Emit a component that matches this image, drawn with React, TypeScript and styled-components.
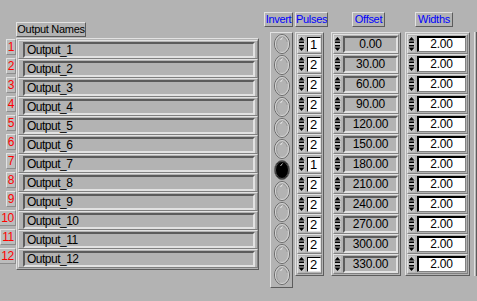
import * as React from 'react';
import styled, { createGlobalStyle } from 'styled-components';

const GRAY = '#b3b3b3';
const LIGHT = '#e2e2e2';
const DARK = '#5c5c5c';
const MID = '#808080';

const names = Array.from({ length: 12 }, (_, i) => `Output_${i + 1}`);
const pulses = [1, 2, 2, 2, 2, 2, 1, 2, 2, 2, 2, 2];
const offsets = Array.from({ length: 12 }, (_, i) => (i * 30).toFixed(2));
const widths = Array.from({ length: 12 }, () => '2.00');
const inverted = names.map((_, i) => i === 6);

const GlobalStyle = createGlobalStyle`
  body {
    margin: 0;
    background: ${GRAY};
    font-family: "Liberation Sans", Arial, sans-serif;
  }
`;

const UpArrow = () => (
  <svg width="7" height="8" viewBox="0 0 7 8">
    <polygon points="0.5,4.5 3.5,1 6.5,4.5" fill="#000" />
    <rect x="1" y="5.5" width="5" height="1.5" fill="#000" />
  </svg>
);

const DownArrow = () => (
  <svg width="7" height="8" viewBox="0 0 7 8">
    <rect x="1" y="1" width="5" height="1.5" fill="#000" />
    <polygon points="0.5,3.5 3.5,7 6.5,3.5" fill="#000" />
  </svg>
);

const Spinner = () => (
  <SpinnerStack>
    <ArrowButton>
      <UpArrow />
    </ArrowButton>
    <ArrowButton>
      <DownArrow />
    </ArrowButton>
  </SpinnerStack>
);

const RoundButton = ({ on }: { on: boolean }) => (
  <svg width="16" height="20" viewBox="0 0 16 20">
    <ellipse cx="8" cy="10" rx="7.5" ry="9.5" fill={on ? '#000' : GRAY} stroke="#6a6a6a" />
    <ellipse cx="8" cy="10" rx="6.5" ry="8.5" fill="none" stroke={on ? '#555' : '#d6d6d6'} />
    {!on && <ellipse cx="8" cy="10.5" rx="5.5" ry="7.5" fill="none" stroke="#9a9a9a" strokeDasharray="0 12 14" />}
    <path d="M6.5 6 L8.5 3.5" stroke={on ? '#c8c8c8' : '#ececec'} strokeWidth="1" />
  </svg>
);

export default function App(): React.ReactElement {
  return (
    <Screen>
      <GlobalStyle />
      <NamesSection>
        <Caption $width={70} $offset={13}>
          Output Names
        </Caption>
        <ArrayBody>
          <IndexColumn>
            {names.map((_, i) => (
              <IndexBox key={i}>{i + 1}</IndexBox>
            ))}
          </IndexColumn>
          <ArrayFrame>
            {names.map((n) => (
              <NameCell key={n}>
                <NameField>{n}</NameField>
              </NameCell>
            ))}
          </ArrayFrame>
        </ArrayBody>
      </NamesSection>

      <Column $gap={5}>
        <Caption $width={29} $blue>
          Invert
        </Caption>
        <ToggleFrame>
          {inverted.map((on, i) => (
            <RoundButton key={i} on={on} />
          ))}
        </ToggleFrame>
      </Column>

      <Column $gap={2}>
        <Caption $width={33} $blue>
          Pulses
        </Caption>
        <ValueFrame $width={29}>
          {pulses.map((p, i) => (
            <ValueCell key={i}>
              <Spinner />
              <PulseBox>{p}</PulseBox>
            </ValueCell>
          ))}
        </ValueFrame>
      </Column>

      <Column $gap={3}>
        <Caption $width={33} $offset={21} $blue>
          Offset
        </Caption>
        <ValueFrame $width={70}>
          {offsets.map((o) => (
            <ValueCell key={o}>
              <Spinner />
              <OffsetDisplay>{o}</OffsetDisplay>
            </ValueCell>
          ))}
        </ValueFrame>
      </Column>

      <Column $gap={4}>
        <Caption $width={38} $offset={10} $blue>
          Widths
        </Caption>
        <ValueFrame $width={65}>
          {widths.map((w, i) => (
            <ValueCell key={i}>
              <Spinner />
              <WidthBox>{w}</WidthBox>
            </ValueCell>
          ))}
        </ValueFrame>
      </Column>

      <EdgeStrip />
    </Screen>
  );
}

// Styled components

const Screen = styled('div')`
  align-items: flex-start;
  background: ${GRAY};
  display: flex;
  height: 301px;
  overflow: hidden;
  width: 477px;
`;

const NamesSection = styled('div')`
  display: flex;
  flex-direction: column;
  margin-left: 3px;
  padding-top: 22px;
`;

const Caption = styled('div')<{ $width: number; $offset?: number; $blue?: boolean }>`
  border: 1px solid;
  border-color: ${LIGHT} ${DARK} ${DARK} ${LIGHT};
  box-sizing: border-box;
  color: ${(p) => (p.$blue ? '#0000ff' : '#000')};
  font-size: 11px;
  height: 15px;
  letter-spacing: -0.3px;
  line-height: 13px;
  margin-left: ${(p) => p.$offset || 0}px;
  overflow: hidden;
  text-align: center;
  white-space: nowrap;
  width: ${(p) => p.$width}px;
`;

const ArrayBody = styled('div')`
  display: flex;
  margin-top: 1px;
`;

const IndexColumn = styled('div')`
  align-items: flex-end;
  display: flex;
  flex-direction: column;
  gap: 3px;
  padding-top: 1px;
  width: 13px;
`;

const IndexBox = styled('div')`
  background: #bcbcbc;
  border: 1px solid;
  border-color: ${LIGHT} #8c8c8c #8c8c8c ${LIGHT};
  box-sizing: border-box;
  color: #ff0000;
  font-size: 12px;
  height: 16px;
  letter-spacing: -0.3px;
  line-height: 14px;
  min-width: 7px;
  padding: 0 1px;
  text-align: center;
`;

const ArrayFrame = styled('div')`
  border: 1px solid;
  border-color: ${LIGHT} ${DARK} ${DARK} ${LIGHT};
  box-sizing: border-box;
  display: flex;
  flex-direction: column;
  padding: 1px 0 1px 1px;
  width: 243px;
`;

const NameCell = styled('div')`
  border: 1px solid;
  border-color: ${LIGHT} ${MID} ${MID} ${LIGHT};
  box-sizing: border-box;
  height: 19px;
  padding: 1px 2px 0 4px;
`;

const NameField = styled('div')`
  background: ${GRAY};
  border: 2px solid;
  border-color: ${DARK} ${LIGHT} ${LIGHT} ${DARK};
  box-sizing: border-box;
  color: #000;
  font-size: 12px;
  height: 100%;
  letter-spacing: -0.5px;
  line-height: 13px;
  padding-left: 2px;
`;

const Column = styled('div')<{ $gap: number }>`
  align-items: flex-start;
  display: flex;
  flex-direction: column;
  gap: 5px;
  margin-left: ${(p) => p.$gap}px;
  padding-top: 12px;
`;

const ToggleFrame = styled('div')`
  align-items: center;
  border: 1px solid;
  border-color: ${LIGHT} ${DARK} ${DARK} ${LIGHT};
  box-sizing: border-box;
  display: flex;
  flex-direction: column;
  gap: 1px;
  height: 256px;
  margin-left: 6px;
  padding-top: 1px;
  width: 23px;

  svg {
    display: block;
  }
`;

const ValueFrame = styled('div')<{ $width: number }>`
  border: 1px solid;
  border-color: ${LIGHT} ${DARK} ${DARK} ${LIGHT};
  box-sizing: border-box;
  display: flex;
  flex-direction: column;
  padding: 1px;
  width: ${(p) => p.$width}px;
`;

const ValueCell = styled('div')`
  align-items: center;
  border: 1px solid;
  border-color: ${LIGHT} ${MID} ${MID} ${LIGHT};
  box-sizing: border-box;
  display: flex;
  gap: 2px;
  height: 20px;
  padding-left: 0;
`;

const SpinnerStack = styled('div')`
  display: flex;
  flex-direction: column;
  gap: 0;
`;

const ArrowButton = styled('div')`
  background: #c4c4c4;
  height: 8px;
  width: 7px;

  svg {
    display: block;
  }
`;

const PulseBox = styled('div')`
  background: #fff;
  border: 1px solid;
  border-color: #000 ${LIGHT} ${LIGHT} #000;
  box-sizing: border-box;
  color: #000;
  font-size: 13px;
  height: 15px;
  line-height: 13px;
  padding-left: 2px;
  width: 15px;
`;

const OffsetDisplay = styled('div')`
  background: ${GRAY};
  border: 2px solid;
  border-color: ${DARK} ${LIGHT} ${LIGHT} ${DARK};
  box-sizing: border-box;
  color: #000;
  font-size: 12px;
  height: 17px;
  letter-spacing: -0.2px;
  line-height: 13px;
  text-align: center;
  width: 56px;
`;

const WidthBox = styled('div')`
  background: #fff;
  border: 1px solid;
  border-color: #000 ${MID} ${MID} #000;
  box-shadow: inset 1px 1px 0 #000;
  box-sizing: border-box;
  color: #000;
  font-size: 12px;
  height: 16px;
  letter-spacing: -0.2px;
  line-height: 14px;
  text-align: center;
  width: 49px;
`;

const EdgeStrip = styled('div')`
  border-left: 1px solid ${LIGHT};
  border-right: 1px solid ${DARK};
  height: 244px;
  margin-left: 4px;
  margin-top: 32px;
  width: 1px;
`;
